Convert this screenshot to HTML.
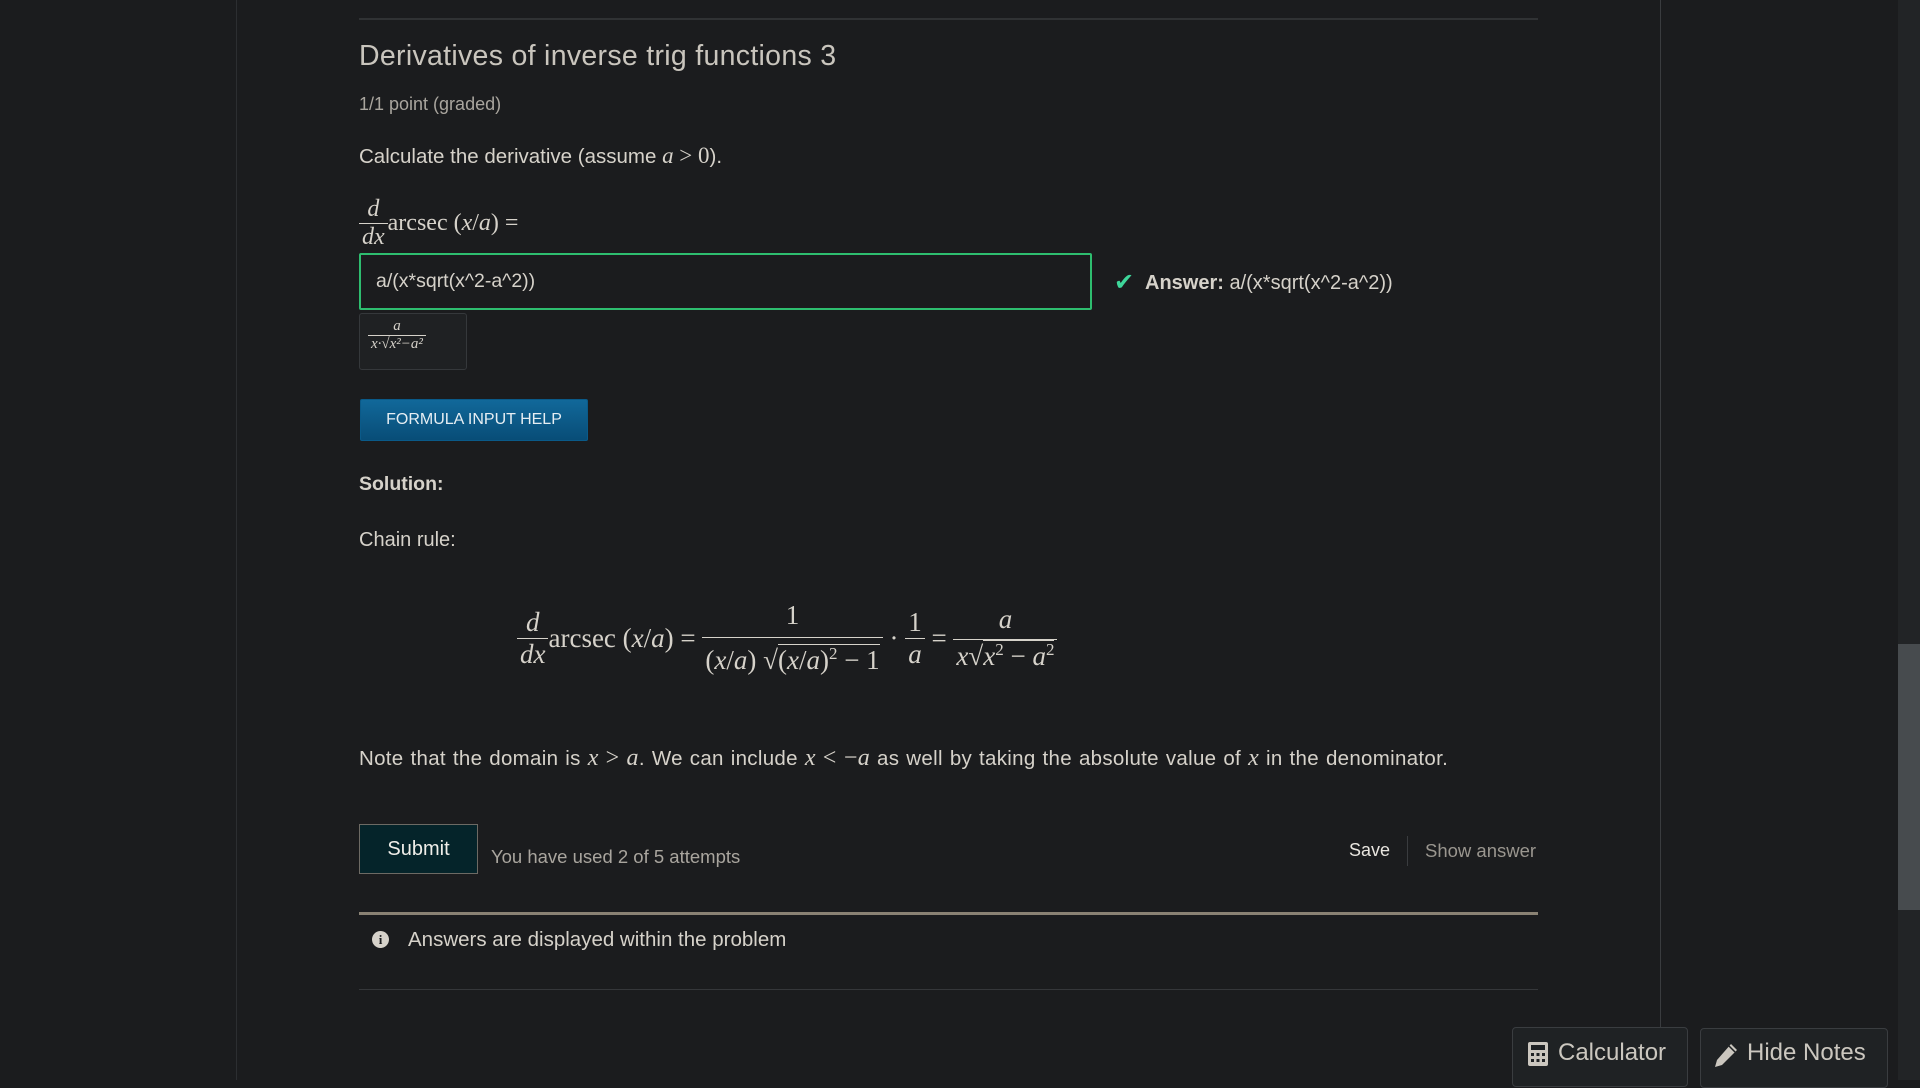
<!DOCTYPE html>
<html><head><meta charset="utf-8"><style>
*{margin:0;padding:0;box-sizing:border-box}
body{width:1920px;height:1080px;background:#1b1c1e;color:#d6d2ca;font-family:"Liberation Sans",sans-serif;position:relative;overflow:hidden}
.a{position:absolute;white-space:nowrap}
.m{font-family:"Liberation Serif",serif}
.i{font-style:italic}
.fr{display:inline-flex;flex-direction:column;align-items:stretch;text-align:center;vertical-align:middle}
.fr>span{padding:0 3px}
.fr>span:first-child{border-bottom:1.5px solid #d6d2ca}
</style></head><body>
<div class="a" style="left:236px;top:0;width:1px;height:1080px;background:#2c2e31"></div>
<div class="a" style="left:1660px;top:0;width:1px;height:1027px;background:#3a3c3f"></div>
<div class="a" style="left:1898px;top:0;width:22px;height:1080px;background:#222426"></div>
<div class="a" style="left:1898px;top:644px;width:22px;height:266px;background:#474b4e"></div>
<div class="a" style="left:359px;top:18px;width:1179px;height:2px;background:#303234"></div>

<div class="a" style="left:359px;top:40px;font-size:28.5px;color:#c9c5bd;letter-spacing:0.3px">Derivatives of inverse trig functions 3</div>
<div class="a" style="left:359px;top:94px;font-size:18px;color:#a9a59e">1/1 point (graded)</div>
<div class="a" style="left:359px;top:143px;font-size:20.5px">Calculate the derivative (assume <span class="m i" style="font-size:23px">a</span> <span class="m" style="font-size:23px">&gt; 0</span>).</div>

<div class="a m" style="left:359px;top:196px;font-size:24px;display:flex;align-items:center">
<span class="fr"><span class="i">d</span><span class="i">dx</span></span><span>arcsec (<i>x</i>/<i>a</i>) =</span></div>

<div class="a" style="left:359px;top:253px;width:733px;height:57px;border:2px solid #2ebd6f;border-radius:2px"></div>
<div class="a" style="left:376px;top:270px;font-size:19.5px">a/(x*sqrt(x^2-a^2))</div>
<div class="a" style="left:1114px;top:268px;font-size:24px;color:#3ed69a">✔</div>
<div class="a" style="left:1145px;top:272px;font-size:20px"><b>Answer:</b> a/(x*sqrt(x^2-a^2))</div>

<div class="a" style="left:359px;top:313px;width:108px;height:57px;border:1px solid #35383b;background:#1f2123;border-radius:3px"></div>
<div class="a m i" style="left:368px;top:318px;font-size:15px;display:flex"><span class="fr"><span style="padding:0 4px">a</span><span>x·√<span style="border-top:1px solid #d6d2ca">x²−a²</span></span></span></div>

<div class="a" style="left:360px;top:399px;width:228px;height:42px;background:linear-gradient(#11689a,#084d77);border:1px solid #0a5a89;border-radius:2px;color:#e6eef3;font-size:16px;text-align:center;line-height:40px">FORMULA INPUT HELP</div>

<div class="a" style="left:359px;top:473px;font-size:19.5px;font-weight:bold">Solution:</div>
<div class="a" style="left:359px;top:529px;font-size:20px">Chain rule:</div>

<div class="a m" style="left:517px;top:600px;font-size:27px;display:flex;align-items:center">
<span class="fr"><span class="i">d</span><span class="i">dx</span></span><span>arcsec (<i>x</i>/<i>a</i>) =&nbsp;</span>
<span class="fr"><span style="padding:0 6px 6px">1</span><span style="padding-top:6px">(<i>x</i>/<i>a</i>) √<span style="border-top:1.5px solid #d6d2ca">(<i>x</i>/<i>a</i>)<sup style="font-size:17px">2</sup> − 1</span></span></span>
<span>&nbsp;·&nbsp;</span><span class="fr"><span>1</span><span class="i">a</span></span><span>&nbsp;=&nbsp;</span>
<span class="fr"><span class="i" style="padding-bottom:4px">a</span><span><i>x</i>√<span style="border-top:1.5px solid #d6d2ca"><i>x</i><sup style="font-size:17px">2</sup> − <i>a</i><sup style="font-size:17px">2</sup></span></span></span></div>

<div class="a" style="left:359px;top:745px;font-size:20.5px;word-spacing:1px;letter-spacing:0.3px">Note that the domain is <span class="m i" style="font-size:24px">x</span> <span class="m" style="font-size:24px">&gt;</span> <span class="m i" style="font-size:24px">a</span>. We can include <span class="m i" style="font-size:24px">x</span> <span class="m" style="font-size:24px">&lt; −<i>a</i></span> as well by taking the absolute value of <span class="m i" style="font-size:24px">x</span> in the denominator.</div>

<div class="a" style="left:359px;top:824px;width:119px;height:50px;background:#05242a;border:1px solid #6d6a64;color:#f0eee9;font-size:20px;text-align:center;line-height:48px">Submit</div>
<div class="a" style="left:491px;top:846px;font-size:18.5px;color:#a9a59e">You have used 2 of 5 attempts</div>
<div class="a" style="left:1349px;top:840px;font-size:18px;color:#e8e5df">Save</div>
<div class="a" style="left:1407px;top:836px;width:1px;height:30px;background:#3a3c3f"></div>
<div class="a" style="left:1425px;top:840px;font-size:18.5px;color:#9a968f">Show answer</div>

<div class="a" style="left:359px;top:912px;width:1179px;height:3px;background:#8a8274"></div>
<div class="a" style="left:372px;top:931px;width:17px;height:17px;border-radius:50%;background:#d6d2ca;color:#1b1c1e;font-size:13px;font-weight:bold;text-align:center;line-height:17px;font-family:'Liberation Serif',serif">i</div>
<div class="a" style="left:408px;top:928px;font-size:20.5px">Answers are displayed within the problem</div>
<div class="a" style="left:359px;top:989px;width:1179px;height:1px;background:#35373a"></div>

<div class="a" style="left:1512px;top:1027px;width:176px;height:60px;background:#1f2224;border:1px solid #3a3d40;border-radius:4px"></div>
<svg class="a" style="left:1528px;top:1042px" width="20" height="24" viewBox="0 0 20 24"><rect x="0" y="0" width="20" height="24" rx="2" fill="#cbc7bf"/><rect x="3" y="3" width="14" height="5" fill="#1f2224"/><g fill="#1f2224"><rect x="3" y="11" width="3" height="3"/><rect x="8.5" y="11" width="3" height="3"/><rect x="14" y="11" width="3" height="3"/><rect x="3" y="17" width="3" height="3"/><rect x="8.5" y="17" width="3" height="3"/><rect x="14" y="17" width="3" height="3"/></g></svg>
<div class="a" style="left:1558px;top:1039px;font-size:24px;color:#cbc7bf">Calculator</div>
<div class="a" style="left:1700px;top:1028px;width:188px;height:60px;background:#1f2224;border:1px solid #3a3d40;border-radius:4px"></div>
<svg class="a" style="left:1714px;top:1043px" width="24" height="24" viewBox="0 0 24 24"><path d="M17 1l6 6L8 22l-7 2 2-7z" fill="#cbc7bf"/><path d="M15 3l6 6" stroke="#1f2224" stroke-width="1.5"/></svg>
<div class="a" style="left:1747px;top:1039px;font-size:24px;color:#cbc7bf">Hide Notes</div>
</body></html>
